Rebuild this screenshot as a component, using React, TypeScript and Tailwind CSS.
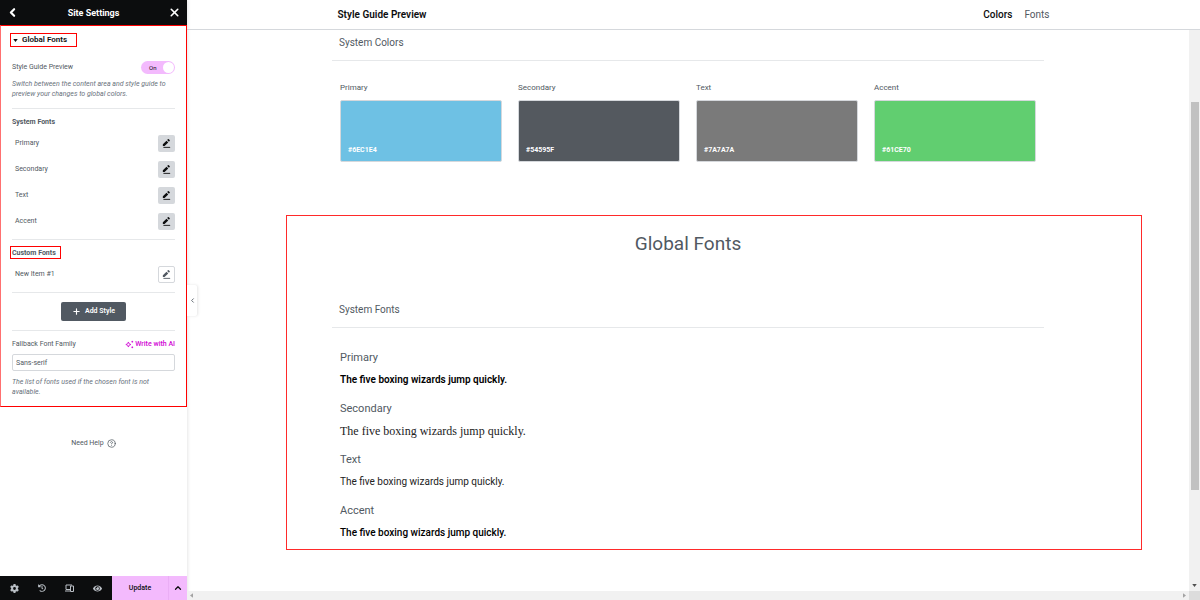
import {
  ChevronLeft,
  ChevronUp,
  CircleQuestionMark,
  Plus,
  X,
} from "lucide-react";
import { FaEye, FaHistory } from "react-icons/fa";
import { FaGear } from "react-icons/fa6";

const SYSTEM_FONTS = ["Primary", "Secondary", "Text", "Accent"];

const COLORS = [
  { name: "Primary", hex: "#6EC1E4", swatch: "bg-[#6ec1e4]" },
  { name: "Secondary", hex: "#54595F", swatch: "bg-[#54595f]" },
  { name: "Text", hex: "#7A7A7A", swatch: "bg-[#7a7a7a]" },
  { name: "Accent", hex: "#61CE70", swatch: "bg-[#61ce70]" },
];

const SAMPLE = "The five boxing wizards jump quickly.";

const FONT_SAMPLES = [
  { name: "Primary", style: "text-[10px] font-semibold text-black" },
  {
    name: "Secondary",
    style: "font-['Liberation_Serif',serif] text-[12px] text-[#222]",
  },
  { name: "Text", style: "text-[10px] text-[#222]" },
  { name: "Accent", style: "text-[10px] font-medium text-black" },
];

export default function App() {
  return (
    <div className="flex h-screen overflow-hidden bg-white font-['Roboto',sans-serif] text-[#515962]">
      <Sidebar />
      <Preview />
    </div>
  );
}

function Sidebar() {
  return (
    <aside className="flex w-[187px] shrink-0 flex-col bg-white shadow-[0_0_4px_rgba(0,0,0,0.15)]">
      <header className="flex h-[25px] shrink-0 items-center justify-between bg-[#0c0d0e] px-[6px] text-white">
        <button aria-label="Back">
          <ChevronLeft className="size-[13px]" strokeWidth={4} />
        </button>
        <h1 className="text-[9px] font-bold leading-3">Site Settings</h1>
        <button aria-label="Close">
          <X className="size-[13px]" strokeWidth={3} />
        </button>
      </header>

      <div className="flex flex-col border border-[#f00] border-l-[#ff7070] px-[11px] pb-[9px] pt-[7px] text-[7px]">
        <button className="-ml-[2px] flex h-[14px] w-[67px] items-center gap-1 border border-[#f00] px-[2px] text-[8px] font-semibold text-[#0c0d0e]">
          <svg viewBox="0 0 6 4" className="h-[3px] w-[5px]" fill="currentColor">
            <path d="M0 0h6L3 4z" />
          </svg>
          Global Fonts
        </button>

        <label className="mt-[14px] flex h-[13px] items-center justify-between">
          Style Guide Preview
          <input type="checkbox" defaultChecked className="peer sr-only" />
          <span className="flex h-[13px] w-[34px] items-center justify-between rounded-full bg-[#f3bafd] pl-2 pr-px text-[6px] text-[#0c0d0e]">
            On
            <span className="size-[11px] rounded-full bg-white" />
          </span>
        </label>
        <Description>
          Switch between the content area and style guide to preview your
          changes to global colors.
        </Description>

        <Divider className="mt-[9px]" />
        <h2 className="mt-2 h-[10px] font-bold leading-[10px]">System Fonts</h2>
        <ul className="mt-2 flex flex-col gap-[9px]">
          {SYSTEM_FONTS.map((name) => (
            <FontRow key={name} name={name} filled />
          ))}
        </ul>

        <Divider className="mt-[9px]" />
        <h2 className="-ml-[2px] mt-[6px] h-[13px] w-[51px] border border-[#f00] pl-px font-bold leading-[12px]">
          Custom Fonts
        </h2>
        <ul className="mt-[7px]">
          <FontRow name="New Item #1" />
        </ul>

        <Divider className="mt-[9px]" />
        <button className="mt-[9px] flex h-[19px] w-[65px] items-center justify-center gap-1 self-center rounded-[2px] bg-[#515962] font-semibold text-white">
          <Plus className="size-[9px]" strokeWidth={3} />
          Add Style
        </button>

        <Divider className="mt-[9px]" />
        <div className="mt-2 flex h-[10px] items-center justify-between">
          <label htmlFor="fallback">Fallback Font Family</label>
          <button className="flex items-center gap-px font-medium text-[#d004d4]">
            <AiSparkles />
            Write with AI
          </button>
        </div>
        <input
          id="fallback"
          defaultValue="Sans-serif"
          className="mt-[5px] h-[17px] w-full rounded-[2px] border border-[#d5d8dc] px-[3px] outline-none"
        />
        <Description className="pt-px">
          The list of fonts used if the chosen font is not available.
        </Description>
      </div>

      <a
        href="#help"
        className="mt-[31px] flex h-[10px] items-center justify-center gap-[3px] text-[7px]"
      >
        Need Help
        <CircleQuestionMark className="size-[9px]" />
      </a>

      <footer className="mt-auto flex h-[24px] shrink-0 bg-[#0c0d0e] text-[#babfc5]">
        <div className="flex flex-1 items-center justify-around">
          <button aria-label="Site settings">
            <FaGear className="size-[9px]" />
          </button>
          <button aria-label="History">
            <FaHistory className="size-[8px]" />
          </button>
          <button aria-label="Responsive mode">
            <Devices />
          </button>
          <button aria-label="Preview changes">
            <FaEye className="size-[9px]" />
          </button>
        </div>
        <button className="w-[56px] bg-[#f3bafd] text-[7px] font-medium text-[#0c0d0e]">
          Update
        </button>
        <button
          aria-label="Save options"
          className="flex w-[19px] items-center justify-center border-l border-[#eaaef5] bg-[#f3bafd] text-[#0c0d0e]"
        >
          <ChevronUp className="size-[10px]" strokeWidth={3} />
        </button>
      </footer>
    </aside>
  );
}

function FontRow({ name, filled }: { name: string; filled?: boolean }) {
  return (
    <li className="flex h-[17px] items-center justify-between pl-[3px]">
      {name}
      <button
        aria-label={`Edit ${name}`}
        className={
          filled
            ? "flex size-[17px] items-center justify-center rounded-[2px] bg-[#d5d8dc] text-[#0c0d0e]"
            : "flex size-[17px] items-center justify-center rounded-[2px] border border-[#d5d8dc] text-[#515962]"
        }
      >
        <svg viewBox="0 0 16 16" className="size-[9px]" fill="currentColor">
          <path d="M1.500 12.500V9.400L8 2.900l3.100 3.100-6.500 6.500zM9.200 1.700l1.200-1.200a1.200 1.200 0 0 1 1.700 0l1.400 1.400a1.200 1.200 0 0 1 0 1.700l-1.200 1.200z" />
          <path d="M2.500 14h12v1.600h-12z" />
        </svg>
      </button>
    </li>
  );
}

function Description({
  children,
  className = "",
}: {
  children: string;
  className?: string;
}) {
  return (
    <p
      className={`mt-[5px] text-[7px] italic leading-[10px] text-[#69727d] ${className}`}
    >
      {children}
    </p>
  );
}

function Divider({ className }: { className: string }) {
  return <hr className={`w-full border-t border-[#e6e8ea] ${className}`} />;
}

function AiSparkles() {
  return (
    <svg
      viewBox="0 0 16 16"
      className="size-[9px]"
      fill="none"
      stroke="currentColor"
      strokeWidth="1.500"
      strokeLinejoin="round"
    >
      <path d="M6 3.500 7.300 6.700 10.500 8 7.300 9.300 6 12.500 4.700 9.300 1.500 8 4.700 6.700z" />
      <path d="M13 1.500v3M11.500 3h3M13 11.500v3M11.500 13h3" />
    </svg>
  );
}

function Devices() {
  return (
    <svg
      viewBox="0 0 18 16"
      className="h-[8px] w-[9px]"
      fill="none"
      stroke="currentColor"
      strokeWidth="2"
    >
      <path d="M10 11H2V2h12M0 14h10" />
      <path d="M11 4h6v11h-6z" />
    </svg>
  );
}

function Preview() {
  return (
    <main className="relative flex min-w-0 flex-1 flex-col">
      <header className="flex h-[30px] shrink-0 items-center border-b border-[#d5d8dc] text-[10px]">
        <div className="mx-auto flex w-[712px] items-center justify-between">
          <h2 className="font-semibold text-[#0c0d0e]">Style Guide Preview</h2>
          <nav className="flex gap-3">
            <a href="#colors" className="font-medium text-[#0c0d0e]">
              Colors
            </a>
            <a href="#fonts">Fonts</a>
          </nav>
        </div>
      </header>

      <div className="flex min-h-0 flex-1">
        <div className="min-w-0 flex-1 overflow-hidden">
          <section id="colors" className="mx-auto w-[712px]">
            <SectionTitle className="mt-[6px]">System Colors</SectionTitle>
            <div className="mt-[21px] grid grid-cols-4 gap-4 px-2">
              {COLORS.map((c) => (
                <div key={c.name}>
                  <p className="text-[8px] leading-3">{c.name}</p>
                  <div
                    className={`mt-[6px] flex h-[62px] items-end rounded-[2px] border border-[#d5d8dc] px-[7px] pb-[6px] text-[7px] font-bold leading-[10px] text-white ${c.swatch}`}
                  >
                    {c.hex}
                  </div>
                </div>
              ))}
            </div>
          </section>

          <section
            id="fonts"
            className="ml-[99px] mr-[47px] mt-[53px] border border-[#ff2a2a] pb-[9px] pl-[45px]"
          >
            <div className="w-[712px]">
              <h2 className="mt-4 text-center text-[19px] leading-6">
                Global Fonts
              </h2>
              <SectionTitle className="mt-[47px]">System Fonts</SectionTitle>
              <dl className="mt-[23px] flex flex-col gap-[15px] px-2">
                {FONT_SAMPLES.map((f) => (
                  <div key={f.name}>
                    <dt className="text-[11px] leading-[14px]">{f.name}</dt>
                    <dd className={`mt-2 leading-[14px] ${f.style}`}>
                      {SAMPLE}
                    </dd>
                  </div>
                ))}
              </dl>
            </div>
          </section>
        </div>

        {/* vertical scrollbar */}
        <div className="flex w-[11px] shrink-0 flex-col items-center bg-[#f1f1f1] pt-[72px]">
          <div className="h-[388px] w-[8px] bg-[#c1c1c1]" />
          <svg viewBox="0 0 6 4" className="mb-1 mt-auto h-[3px] w-[5px]">
            <path d="M0 0h6L3 4z" fill="#505050" />
          </svg>
        </div>
      </div>

      {/* horizontal scrollbar */}
      <div className="flex h-[9px] shrink-0 bg-[#f1f1f1]">
        <div className="flex flex-1 items-center justify-between px-[3px]">
          <svg viewBox="0 0 4 6" className="h-[5px] w-[3px]">
            <path d="M4 0v6L0 3z" fill="#a3a3a3" />
          </svg>
          <svg viewBox="0 0 4 6" className="h-[5px] w-[3px]">
            <path d="M0 0v6l4-3z" fill="#a3a3a3" />
          </svg>
        </div>
        <div className="w-[11px] bg-[#dcdcdc]" />
      </div>

      {/* panel collapse handle */}
      <button
        aria-label="Collapse panel"
        className="absolute left-0 top-[285px] flex h-[31px] w-[10px] items-center justify-center rounded-r-[2px] bg-white shadow-[1px_0_3px_rgba(0,0,0,0.1)]"
      >
        <ChevronLeft className="size-[7px]" strokeWidth={3} />
      </button>
    </main>
  );
}

function SectionTitle({
  children,
  className,
}: {
  children: string;
  className: string;
}) {
  return (
    <h3
      className={`border-b border-[#e6e8ea] px-[7px] pb-[11px] text-[10px] leading-[13px] ${className}`}
    >
      {children}
    </h3>
  );
}
